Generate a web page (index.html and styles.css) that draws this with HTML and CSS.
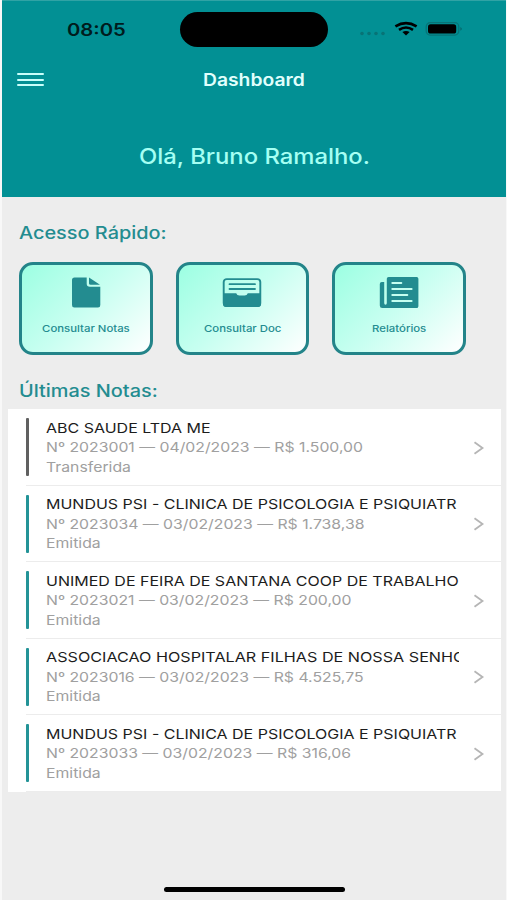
FILE: index.html
```html
<!DOCTYPE html>
<html lang="pt-BR">
<head>
<meta charset="utf-8">
<title>Dashboard</title>
<link rel="stylesheet" href="styles.css">
</head>
<body>
<div class="screen">
  <header class="hero">
    <div class="status">
      <time class="clock"><span class="wide">08:05</span></time>
      <div class="island"></div>
      <svg class="indicators" width="104" height="20" viewBox="0 0 104 20">
        <g fill="#087376"><circle cx="3" cy="13.5" r="1.8"/><circle cx="10" cy="13.5" r="1.8"/><circle cx="17" cy="13.5" r="1.8"/><circle cx="24" cy="13.5" r="1.8"/></g>
        <g fill="none" stroke="#000" stroke-width="2.7"><path d="M36.4 6.3Q47-.1 57.6 6.3"/><path d="M40 9.8Q47 5.2 54 9.8"/></g>
        <path d="M43.4 12Q47 9.9 50.6 12L47 15.4Z"/>
        <rect x="67.2" y="2.7" width="32.6" height="12.4" rx="4" fill="none" stroke="#087376" stroke-width="1.2"/>
        <rect x="69" y="4.3" width="28.2" height="9.2" rx="2.6"/>
        <path d="M101.5 7q2.4 1.9 0 3.8z" fill="#065c5e"/>
      </svg>
    </div>
    <nav class="navbar">
      <div class="menu"><i></i><i></i><i></i></div>
      <h1 class="nav-title"><span class="wide">Dashboard</span></h1>
    </nav>
    <p class="greeting"><span class="wide">Olá, Bruno Ramalho.</span></p>
  </header>
  <main>
    <h2 class="heading"><span class="wide">Acesso Rápido:</span></h2>
    <div class="cards">
      <div class="card">
        <svg width="44" height="34" viewBox="0 0 44 34" fill="#238c90"><path d="M10.5 1.5H22.7v6.2q0 3 3.2 3H36.3V29q0 2.5-2.3 2.5H10.3Q8 31.5 8 29V4q0-2.5 2.5-2.5zM25 1.5L36 8.8h-9.3q-1.7 0-1.7-1.4z"/></svg>
        <span class="label"><span class="wide">Consultar Notas</span></span>
      </div>
      <div class="card">
        <svg width="44" height="34" viewBox="0 0 44 34"><rect x="3.7" y="3.1" width="36.6" height="27" rx="3" fill="none" stroke="#238c90" stroke-width="1.9"/><path d="M3 17.2h13.2q.8 2.4 3.2 2.4h5.2q2.4 0 3.2-2.4H41V28q0 3-3 3H6q-3 0-3-3z" fill="#238c90"/><path d="M9.5 8.2h25.5M9.5 13h25.5" stroke="#238c90" stroke-width="1.8" stroke-linecap="round"/></svg>
        <span class="label"><span class="wide">Consultar Doc</span></span>
      </div>
      <div class="card">
        <svg width="44" height="34" viewBox="0 0 44 34"><path d="M11.6 1h28q1.8 0 1.8 1.8v27.4q0 1.9-2 1.9H5.2Q2.8 32.1 2.8 29.6V8q0-2 2-2h2.4v21q0 1.7 1.3 1.7T9.8 27V2.8Q9.8 1 11.6 1z" fill="#238c90"/><path d="M15.3 7h9M15.3 13h19.3M15.3 19h15M15.3 25h19.3" stroke="#c4fff0" stroke-width="2" stroke-linecap="round"/></svg>
        <span class="label"><span class="wide">Relatórios</span></span>
      </div>
    </div>
    <h2 class="heading recent"><span class="wide">Últimas Notas:</span></h2>
    <ul class="list"></ul>
  </main>
  <div class="home"></div>
</div>
<script src="app.js"></script>
</body>
</html>
```
FILE: styles.css
```css
* { box-sizing: border-box; margin: 0; padding: 0; }
body { width: 507px; height: 900px; overflow: hidden; background: #f8f8f8; font-family: Inter, "Noto Sans", sans-serif; }
.screen { display: flex; flex-direction: column; width: 504.5px; height: 900px; margin-left: 1.5px; background: #ededed; }
.wide { display: inline-block; white-space: nowrap; transform: scaleX(1.17); transform-origin: left; }
.hero { height: 197px; background: #029094; border-top: 1px solid #30a3a5; }
.status { display: grid; grid-template-columns: 178.5px 148px 1fr; height: 56px; padding-top: 11px; }
.clock { padding: 7px 0 0 65px; font-size: 17px; line-height: 22px; font-weight: 600; color: #001c1d; }
.clock .wide { transform: scaleX(1.19); }
.island { height: 35px; border-radius: 18px; background: #000; }
.indicators { margin: 8px 0 0 30.5px; }
.navbar { display: grid; grid-template-columns: 201.5px 1fr; height: 44px; align-items: center; }
.menu { display: grid; gap: 3.7px; width: 27px; margin: 1px 0 0 15px; }
.menu i { height: 2px; border-radius: 1px; background: #c9fffb; }
.nav-title { padding-top: 1px; font-size: 17px; line-height: 22px; font-weight: 600; color: #e1fffc; }
.nav-title .wide { transform: scaleX(1.135); }
.greeting { margin: 42px 0 0 137px; font-size: 21px; line-height: 28px; font-weight: 500; color: #a5fff3; }
.greeting .wide { transform: scaleX(1.135); }
.heading { margin: 25px 0 0 17.5px; font-size: 17px; line-height: 22px; font-weight: 500; color: #238c90; }
.heading.recent { margin-top: 25px; }
.cards { display: grid; grid-template-columns: repeat(3, 133.5px); gap: 23.1px; margin: 18px 0 0 17.5px; }
.card { display: flex; flex-direction: column; align-items: center; height: 93px; padding-top: 11px; border: 3px solid #238489; border-radius: 14px; background: linear-gradient(135deg, #9cffe2, #c9fff1 50%, #fff); }
.label { margin-top: 12px; font-size: 9.3px; line-height: 14px; font-weight: 500; color: #238c90; }
.label .wide { transform: scaleX(1.22); transform-origin: center; }
.list { list-style: none; width: 493.5px; margin: 7px 0 0 6px; background: #fff; }
.row { display: grid; grid-template-columns: 3px 413px 1fr; column-gap: 17px; height: 76.5px; margin-left: 18.5px; padding-top: 9px; border-bottom: 1px solid #ececec; }
.bar { height: 58px; background: #239397; border-radius: 1px; }
.bar.transferred { background: #606060; }
.info { overflow: hidden; padding-top: .6px; color: #a0a0a0; font-size: 13.5px; line-height: 19.6px; }
.info p { height: 19.6px; }
.info .name { color: #1c1c1c; }
.name .wide { transform: scaleX(1.185); }
.row:nth-child(4) .name .wide { transform: scaleX(1.197); }
.chevron { margin: 21.5px 0 0 -4px; }
.home { width: 181px; height: 5px; border-radius: 3px; background: #000; margin: auto 0 8px 162px; }
```
FILE: app.js
```js
const notes = [
  ["ABC SAUDE LTDA ME", "Nº 2023001 — 04/02/2023 — R$ 1.500,00", "Transferida"],
  ["MUNDUS PSI - CLINICA DE PSICOLOGIA E PSIQUIATR", "Nº 2023034 — 03/02/2023 — R$ 1.738,38", "Emitida"],
  ["UNIMED DE FEIRA DE SANTANA COOP DE TRABALHO", "Nº 2023021 — 03/02/2023 — R$ 200,00", "Emitida"],
  ["ASSOCIACAO HOSPITALAR FILHAS DE NOSSA SENHO", "Nº 2023016 — 03/02/2023 — R$ 4.525,75", "Emitida"],
  ["MUNDUS PSI - CLINICA DE PSICOLOGIA E PSIQUIATR", "Nº 2023033 — 03/02/2023 — R$ 316,06", "Emitida"]
];
document.querySelector(".list").innerHTML = notes.map(([name, detail, state]) => `
  <li class="row">
    <span class="bar ${state === "Transferida" ? "transferred" : ""}"></span>
    <div class="info">
      <p class="name"><span class="wide">${name}</span></p>
      <p><span class="wide">${detail}</span></p>
      <p><span class="wide">${state}</span></p>
    </div>
    <svg class="chevron" width="14" height="16" viewBox="0 0 14 16" fill="none" stroke="#b5b5b5" stroke-width="1.8"><path d="M2.5 2.2L10.5 8l-8 5.8"/></svg>
  </li>`).join("");
```
